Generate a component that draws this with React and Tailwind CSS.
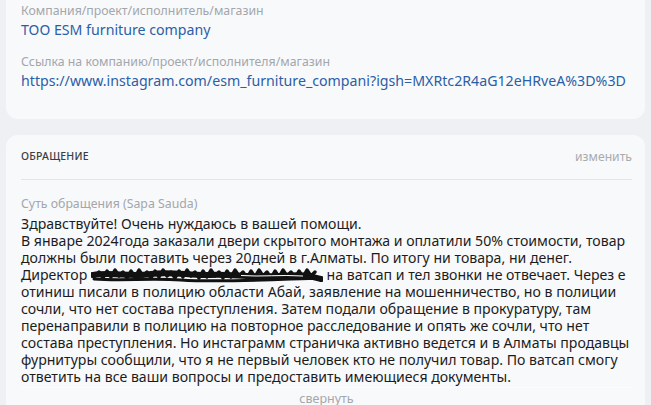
import React from "react";

const lines = [
  "Здравствуйте! Очень нуждаюсь в вашей помощи.",
  "В январе 2024года заказали двери скрытого монтажа и оплатили 50% стоимости, товар",
  "должны были поставить через 20дней в г.Алматы. По итогу ни товара, ни денег.",
  null,
  "отиниш писали в полицию области Абай, заявление на мошенничество, но в полиции",
  "сочли, что нет состава преступления. Затем подали обращение в прокуратуру, там",
  "перенаправили в полицию на повторное расследование и опять же сочли, что нет",
  "состава преступления. Но инстаграмм страничка активно ведется и в Алматы продавцы",
  "фурнитуры сообщили, что я не первый человек кто не получил товар. По ватсап смогу",
  "ответить на все ваши вопросы и предоставить имеющиеся документы.",
];

function Scribble() {
  let d1 = "M1 7";
  for (let x = 4; x <= 226; x += 4) {
    const y = (x / 4) % 2 === 0 ? 3 + ((x * 7) % 3) : 11 - ((x * 5) % 3);
    d1 += ` L${x} ${y}`;
  }
  return (
    <svg width="232" height="16" viewBox="0 0 232 16" className="inline-block align-[-3px]">
      <path d={d1} stroke="#111" strokeWidth="3.4" fill="none" strokeLinejoin="round" strokeLinecap="round" />
      <path
        d="M2 8 C20 5 40 10 60 7 S100 9 120 8 S160 11 190 9 S220 10 230 12"
        stroke="#111"
        strokeWidth="6"
        fill="none"
        strokeLinecap="round"
      />
      <path d="M3 12 C30 14 60 11 90 13 S150 14 200 12 S226 12 230 13" stroke="#111" strokeWidth="3" fill="none" strokeLinecap="round" />
      <path d="M150 8.5 C170 10 190 7.5 212 9" stroke="#fff" strokeWidth="1" fill="none" />
    </svg>
  );
}

export default function App() {
  const sans = { fontFamily: '"Noto Sans", "Open Sans", sans-serif' };
  return (
    <div
      className="w-[651px] h-[405px] overflow-hidden bg-[#eef0f3] px-[6px] flex flex-col gap-[16px]"
      style={sans}
    >
      <div className="h-[119px] shrink-0 bg-[#f8f9fb] rounded-b-[12px] px-[15px] pt-[3px]">
        <div className="text-[12.3px] leading-[16px] text-[#a3a7ab]">Компания/проект/исполнитель/магазин</div>
        <div className="text-[14.2px] leading-[22px] text-[#2b5ea7]">ТОО ESM furniture company</div>
        <div className="text-[12.3px] leading-[16px] text-[#a3a7ab] mt-[13px]">Ссылка на компанию/проект/исполнителя/магазин</div>
        <div className="text-[14.2px] leading-[22px] text-[#2b5ea7] whitespace-nowrap">
          https://www.instagram.com/esm_furniture_compani?igsh=MXRtc2R4aG12eHRveA%3D%3D
        </div>
      </div>
      <div className="flex-1 bg-[#f8f9fb] rounded-t-[12px] pl-[15px] pr-[13px]">
        <div className="flex items-center justify-between h-[45px] border-b border-[#e3e5e8]">
          <span className="text-[10.5px] font-medium text-[#3a3d42] tracking-[0.2px]">ОБРАЩЕНИЕ</span>
          <span className="text-[12.2px] text-[#a8abae]">изменить</span>
        </div>
        <div className="text-[12.3px] leading-[16px] text-[#a3a7ab] mt-[16px]">Суть обращения (Sapa Sauda)</div>
        <div className="text-[14.1px] leading-[17px] text-[#1c1c1c] whitespace-nowrap mt-[3px]">
          {lines.map((l, i) =>
            l === null ? (
              <div key={i}>
                Директор <Scribble /> на ватсап и тел звонки не отвечает. Через е
              </div>
            ) : (
              <div key={i}>{l}</div>
            )
          )}
        </div>
        <div className="text-center text-[12.5px] leading-[16px] text-[#a3a7ab] mt-[2px] pt-[3px] border-t border-[#fbfcfd]">свернуть</div>
      </div>
    </div>
  );
}
